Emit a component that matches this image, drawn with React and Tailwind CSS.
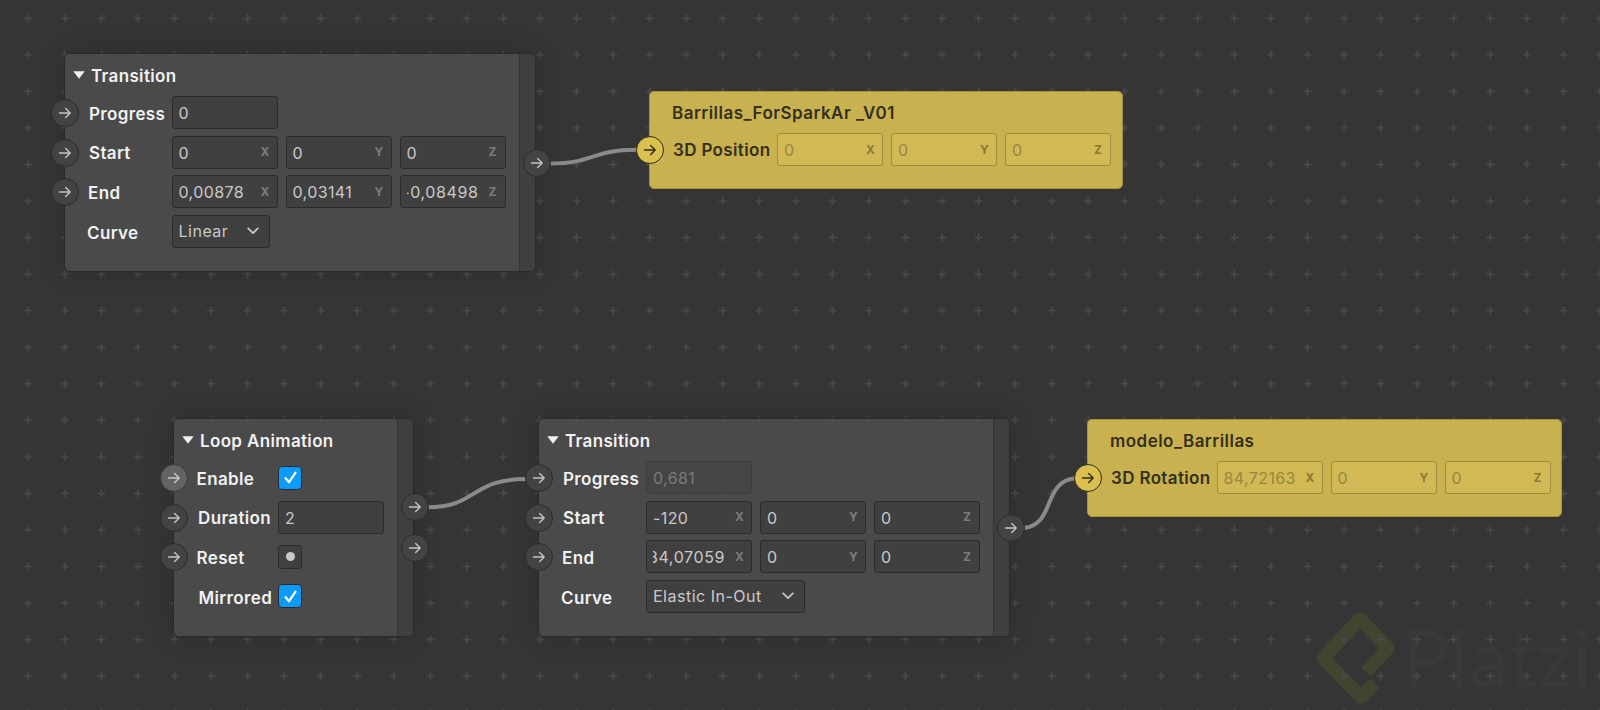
import React from "react";

function ArrowGlyph({ className }) {
  return (
    <svg viewBox="0 0 14 14" className={className} fill="none" stroke="currentColor" strokeWidth="1.4" strokeLinecap="round" strokeLinejoin="round">
      <path d="M1.5 7H12.2M7.6 2.4L12.2 7L7.6 11.6" />
    </svg>
  );
}

function Port({ className = "", tone = "dark" }) {
  const tones = {
    dark: "bg-[#434343] border-[#2c2c2c] text-[#c4c4c4]",
    lit: "bg-[#636363] border-[#3a3a3a] text-[#c9c9c9]",
    gold: "bg-[#dcc04f] border-[#2f2c1c] text-[#2f2c1c]",
  };
  return (
    <div className={`absolute z-10 flex h-[28px] w-[28px] items-center justify-center rounded-full border-[1.5px] ${tones[tone]} ${className}`}>
      <ArrowGlyph className="h-[14px] w-[14px]" />
    </div>
  );
}

function Field({ value, axis, clip, muted, gold }) {
  const box = gold
    ? "border-[#9c8a3e] bg-[#d2b955]"
    : muted
      ? "border-[#3c3c3c] bg-[#454545]"
      : "border-[#2b2b2b] bg-[#404040]";
  const ink = gold ? "text-[#978741]" : muted ? "text-[#7b7b7b]" : "text-[#c9c9c9]";
  const axisInk = gold ? "text-[#8a7a36]" : "text-[#7c7c7c]";
  return (
    <div className={`flex h-[33px] w-[106px] shrink-0 items-center rounded-[3px] border-[1.5px] pl-[6px] ${box}`}>
      <div className={`flex w-[72px] overflow-hidden whitespace-nowrap pt-[1px] text-[16px] ${ink} ${clip ? "justify-end tracking-[0.6px]" : "justify-start tracking-[0.4px]"}`}>
        <span className="shrink-0">{value}</span>
      </div>
      {axis && <span className={`ml-[10px] text-[12px] font-bold ${axisInk}`}>{axis}</span>}
    </div>
  );
}

function Select({ value, width }) {
  return (
    <div className={`flex h-[33px] shrink-0 items-center justify-between rounded-[3px] border-[1.5px] border-[#2b2b2b] bg-[#404040] pl-[6px] pr-[10px] text-[16px] tracking-[0.5px] text-[#c9c9c9] ${width}`}>
      <span>{value}</span>
      <svg viewBox="0 0 12 8" className="h-[8px] w-[12px]" fill="none" stroke="#c4c4c4" strokeWidth="1.9" strokeLinecap="round" strokeLinejoin="round">
        <path d="M1.2 1.4L6 6.2L10.8 1.4" />
      </svg>
    </div>
  );
}

function Checkbox() {
  return (
    <div className="flex h-[24px] w-[24px] shrink-0 items-center justify-center rounded-[4px] border-[1.5px] border-[#2b2b2b] bg-[#0c9bfa]">
      <svg viewBox="0 0 14 14" className="h-[15px] w-[15px]" fill="none" stroke="#ffffff" strokeWidth="2.1" strokeLinecap="round" strokeLinejoin="round">
        <path d="M2.4 7.6L5.6 11.4L11.6 2.6" />
      </svg>
    </div>
  );
}

function Row({ label, labelWidth, port, shift = "", children }) {
  return (
    <div className="relative flex h-[33px] items-center pl-[24px]">
      {port && <Port tone={port} className="left-[-14px] top-[3px]" />}
      <span className={`shrink-0 translate-y-[1.5px] text-[17px] font-semibold tracking-[0.35px] text-[#f1f1f1] ${labelWidth} ${shift}`}>{label}</span>
      <div className="flex items-center gap-[8px]">{children}</div>
    </div>
  );
}

function DarkNode({ className, title, outs, children }) {
  return (
    <div className={`absolute flex rounded-[6px] border-[1.5px] border-[#2a2a2a] bg-[#4c4c4c]/95 shadow-[0_0_26px_rgba(0,0,0,0.16)] ${className}`}>
      <div className="min-w-0 flex-1">
        <div className="flex h-[41px] items-center pl-[8px]">
          <svg viewBox="0 0 12 8" className="mr-[6px] h-[8px] w-[12px]" fill="#f0f0f0">
            <path d="M0.3 0.3H11.7L6 7.8Z" />
          </svg>
          <span className="translate-y-[1.5px] text-[17px] font-semibold tracking-[0.35px] text-[#f1f1f1]">{title}</span>
        </div>
        <div className="mt-[1px] flex flex-col gap-[6.6px]">{children}</div>
      </div>
      <div className="relative w-[16px] shrink-0 rounded-r-[5px] border-l-[1.5px] border-[#343434] bg-[#3f3f3f]">{outs}</div>
    </div>
  );
}

function GoldNode({ className, title, label, labelWidth, values }) {
  return (
    <div className={`absolute rounded-[5px] border border-[#a8923e] bg-[#cfb651]/[0.97] ${className}`}>
      <div className="flex h-[41px] items-center pl-[22px] text-[17px] font-semibold tracking-[0.47px] text-[#33301f]">
        <span className="translate-y-[0.5px]">{title}</span>
      </div>
      <div className="relative flex h-[33px] items-center pl-[23px]">
        <Port tone="gold" className="left-[-14px] top-[3px]" />
        <span className={`shrink-0 translate-y-[1px] text-[17px] font-semibold tracking-[0.35px] text-[#33301f] ${labelWidth}`}>{label}</span>
        <div className="flex items-center gap-[8px]">
          {values.map((v) => (
            <Field key={v.axis} gold value={v.value} axis={v.axis} />
          ))}
        </div>
      </div>
    </div>
  );
}

export default function App() {
  return (
    <div className="relative h-[710px] w-[1600px] overflow-hidden bg-[#353535] font-[family-name:Inter,sans-serif]">
      {/* watermark */}
      <svg className="absolute inset-0 h-full w-full" viewBox="0 0 1600 710">
        <path d="M1366 672L1388 648L1360 619L1323 658L1361 697L1375 683" fill="none" stroke="#41442f" strokeWidth="13.5" strokeLinejoin="round" />
      </svg>
      <span className="absolute left-[1402px] top-[612px] font-[family-name:Lato,sans-serif] text-[80px] font-normal leading-[88px] text-[#393939]">Platzi</span>

      {/* dotted canvas */}
      <svg className="absolute inset-0 h-full w-full" viewBox="0 0 1600 710">
        <defs>
          <pattern id="cross" x="23.8" y="13.8" width="36.55" height="36.55" patternUnits="userSpaceOnUse">
            <path d="M0.5 4.5H8.5M4.5 0.5V8.5" stroke="#4b4b4b" strokeWidth="1.6" fill="none" />
          </pattern>
        </defs>
        <rect width="1600" height="710" fill="url(#cross)" />
      </svg>

      {/* wires */}
      <svg className="absolute inset-0 z-[1] h-full w-full" viewBox="0 0 1600 710" fill="none" stroke="#8a8a8a" strokeWidth="4">
        <path d="M549 163.5C596 163.5 590 149.8 637 149.8" />
        <path d="M427 507.3C478 507.3 470 479 526 479" />
        <path d="M1024 528C1056 524 1042 482 1075 478.3" />
      </svg>

      <DarkNode
        className="left-[64px] top-[53px] h-[219px] w-[472px]"
        title="Transition"
        outs={<Port className="right-[-15.5px] top-[95px]" />}
      >
        <Row label="Progress" labelWidth="w-[82.5px]" port="dark">
          <Field value="0" />
        </Row>
        <Row label="Start" labelWidth="w-[82.5px]" port="dark">
          <Field value="0" axis="X" />
          <Field value="0" axis="Y" />
          <Field value="0" axis="Z" />
        </Row>
        <Row label="End" labelWidth="w-[82.5px]" shift="-translate-x-[1px]" port="dark">
          <Field value="0,00878" axis="X" />
          <Field value="0,03141" axis="Y" />
          <Field value="-0,08498" axis="Z" clip />
        </Row>
        <Row label="Curve" labelWidth="w-[82.5px]" shift="-translate-x-[2px]">
          <Select value="Linear" width="w-[98px]" />
        </Row>
      </DarkNode>

      <GoldNode
        className="left-[649px] top-[91px] h-[98px] w-[474px]"
        title="Barrillas_ForSparkAr _V01"
        label="3D Position"
        labelWidth="w-[104px]"
        values={[
          { value: "0", axis: "X" },
          { value: "0", axis: "Y" },
          { value: "0", axis: "Z" },
        ]}
      />

      <DarkNode
        className="left-[173px] top-[418px] h-[219px] w-[241px]"
        title="Loop Animation"
        outs={
          <>
            <Port className="right-[-15.5px] top-[74px]" />
            <Port className="right-[-15.5px] top-[115px]" />
          </>
        }
      >
        <Row label="Enable" labelWidth="w-[80px]" shift="-translate-x-[1.5px]" port="lit">
          <Checkbox />
        </Row>
        <Row label="Duration" labelWidth="w-[80px]" port="dark">
          <Field value="2" />
        </Row>
        <Row label="Reset" labelWidth="w-[80px]" shift="-translate-x-[1.5px]" port="dark">
          <div className="flex h-[24px] w-[24px] items-center justify-center rounded-[3px] border-[1.5px] border-[#2b2b2b] bg-[#404040]">
            <div className="h-[9px] w-[9px] rounded-full bg-[#c9c9c9]" />
          </div>
        </Row>
        <Row label="Mirrored" labelWidth="w-[80px]" shift="translate-x-[0.5px]">
          <Checkbox />
        </Row>
      </DarkNode>

      <DarkNode
        className="left-[538px] top-[418px] h-[219px] w-[472px]"
        title="Transition"
        outs={<Port className="right-[-15.5px] top-[95px]" />}
      >
        <Row label="Progress" labelWidth="w-[83px]" port="dark">
          <Field value="0,681" muted />
        </Row>
        <Row label="Start" labelWidth="w-[83px]" port="dark">
          <Field value="-120" axis="X" />
          <Field value="0" axis="Y" />
          <Field value="0" axis="Z" />
        </Row>
        <Row label="End" labelWidth="w-[83px]" shift="-translate-x-[1px]" port="dark">
          <Field value="84,07059" axis="X" clip />
          <Field value="0" axis="Y" />
          <Field value="0" axis="Z" />
        </Row>
        <Row label="Curve" labelWidth="w-[83px]" shift="-translate-x-[2px]">
          <Select value="Elastic In-Out" width="w-[159px]" />
        </Row>
      </DarkNode>

      <GoldNode
        className="left-[1087px] top-[419px] h-[98px] w-[475px]"
        title="modelo_Barrillas"
        label="3D Rotation"
        labelWidth="w-[105.5px]"
        values={[
          { value: "84,72163", axis: "X" },
          { value: "0", axis: "Y" },
          { value: "0", axis: "Z" },
        ]}
      />
    </div>
  );
}
